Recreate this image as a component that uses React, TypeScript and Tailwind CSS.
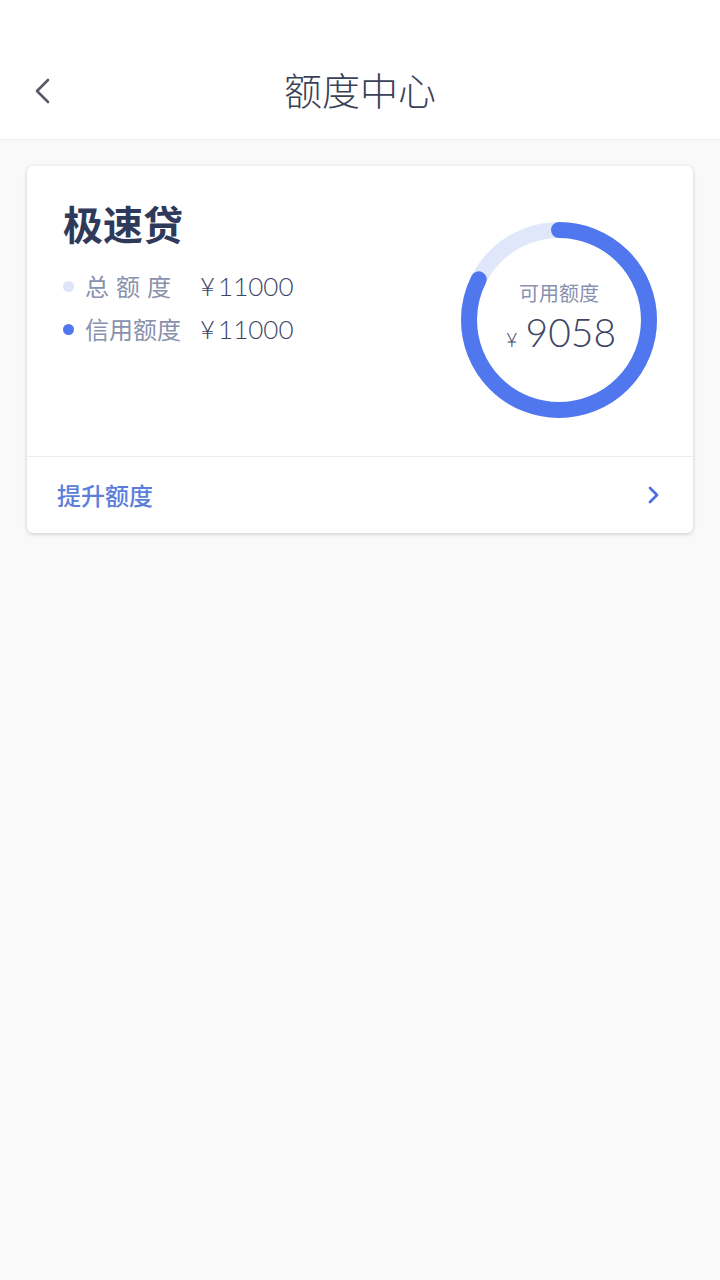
import React from "react";

const CJK = '"Noto Sans CJK SC", "Noto Sans", sans-serif';
const NUM = 'Lato, "Noto Sans CJK SC", sans-serif';

function Ring() {
  const r = 90;
  const c = 2 * Math.PI * r;
  const ratio = 9058 / 11000;
  return (
    <svg width="196" height="196" viewBox="0 0 196 196" className="absolute left-0 top-0">
      <circle cx="98" cy="98" r={r} fill="none" stroke="#e1e7fa" strokeWidth="16" />
      <circle
        cx="98"
        cy="98"
        r={r}
        fill="none"
        stroke="#5177ef"
        strokeWidth="16"
        strokeLinecap="round"
        strokeDasharray={`${c * ratio} ${c}`}
        transform="rotate(-90 98 98)"
      />
    </svg>
  );
}

export default function App() {
  return (
    <div className="min-h-[1280px] w-[720px] bg-[#f9f9f9]" style={{ fontFamily: CJK }}>
      <div className="relative flex h-[140px] items-center justify-center border-b border-[#efefef] bg-white pt-[38px]">
        <svg className="absolute left-[32px] top-[78px]" width="20" height="26" viewBox="0 0 20 26">
          <path d="M16 2 L5 13 L16 24" fill="none" stroke="#555a66" strokeWidth="2.6" strokeLinecap="round" strokeLinejoin="round" />
        </svg>
        <div className="text-[38px] font-light leading-none text-[#3b4157]">额度中心</div>
      </div>

      <div className="px-[27px] pt-[26px]">
        <div className="overflow-hidden rounded-[6px] bg-white shadow-[0_1px_4px_rgba(0,0,0,0.18)]">
          <div className="flex h-[291px] items-start justify-between border-b border-[#ececec] pl-[36px] pr-[36px]">
            <div className="pt-[37px]">
              <div className="text-[40px] font-bold leading-none text-[#2f3a5a]">极速贷</div>
              <div className="mt-[30px] flex items-center">
                <span className="mr-[11px] h-[11px] w-[11px] rounded-full bg-[#dfe5f8]" />
                <span className="w-[115px] text-[24px] leading-none tracking-[7px] text-[#8891ad]">总额度</span>
                <span className="text-[26px] font-light leading-none text-[#3d4566]" style={{ fontFamily: NUM }}>
                  <span className="mr-[3px]">¥</span>11000
                </span>
              </div>
              <div className="mt-[17px] flex items-center">
                <span className="mr-[11px] h-[11px] w-[11px] rounded-full bg-[#5177ef]" />
                <span className="w-[115px] text-[24px] leading-none text-[#8891ad]">信用额度</span>
                <span className="text-[26px] font-light leading-none text-[#3d4566]" style={{ fontFamily: NUM }}>
                  <span className="mr-[3px]">¥</span>11000
                </span>
              </div>
            </div>
            <div className="relative mt-[56px] h-[196px] w-[196px]">
              <Ring />
              <div className="absolute inset-0 flex flex-col items-center justify-center pb-[4px]">
                <div className="text-[20px] leading-none text-[#8891ad]">可用额度</div>
                <div className="mt-[10px] flex items-baseline pl-[4px] text-[#3d4566]" style={{ fontFamily: NUM }}>
                  <span className="mr-[8px] text-[20px] font-light">¥</span>
                  <span className="text-[39px] font-light leading-none">9058</span>
                </div>
              </div>
            </div>
          </div>
          <div className="flex h-[76px] items-center justify-between pl-[30px] pr-[32px]">
            <span className="text-[24px] font-medium leading-none text-[#5b7edb]">提升额度</span>
            <svg width="14" height="20" viewBox="0 0 14 20">
              <path d="M3 3 L10 10 L3 17" fill="none" stroke="#4f6fdc" strokeWidth="2.8" strokeLinecap="round" strokeLinejoin="round" />
            </svg>
          </div>
        </div>
      </div>
    </div>
  );
}
